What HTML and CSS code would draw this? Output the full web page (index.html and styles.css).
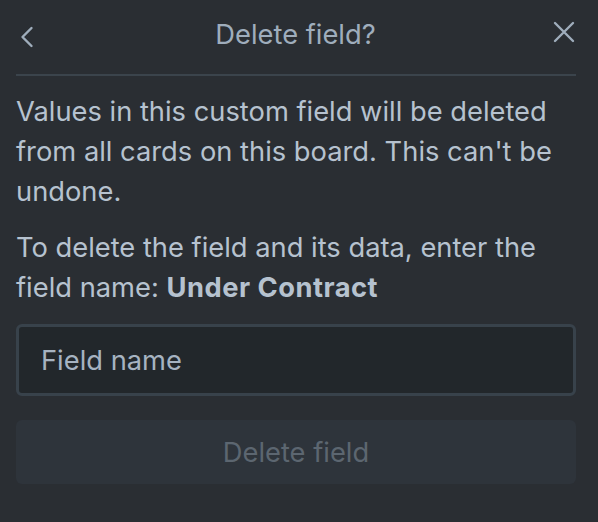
FILE: index.html
```html
<!DOCTYPE html>
<html lang="en">
<head>
<meta charset="utf-8">
<title>Delete field?</title>
<link rel="stylesheet" href="styles.css">
</head>
<body>
<div class="popover">
  <header class="header">
    <button class="icon-btn back" aria-label="Back">
      <svg width="14" height="22" viewBox="0 0 14 22"><path d="M11.5 2 L2.5 11 L11.5 20" fill="none" stroke="currentColor" stroke-width="2.4" stroke-linecap="round" stroke-linejoin="round"/></svg>
    </button>
    <h2 class="title">Delete field?</h2>
    <button class="icon-btn close" aria-label="Close">
      <svg width="22" height="22" viewBox="0 0 22 22"><path d="M2 2 L20 20 M20 2 L2 20" fill="none" stroke="currentColor" stroke-width="2.4" stroke-linecap="round"/></svg>
    </button>
  </header>
  <div class="divider"></div>
  <div class="content">
    <p class="text">Values in this custom field will be deleted from all cards on this board. This can't be undone.</p>
    <p class="text">To delete the field and its data, enter the field name: <strong>Under Contract</strong></p>
    <input class="field" type="text" placeholder="Field name">
    <button class="delete-btn" disabled>Delete field</button>
  </div>
</div>
</body>
</html>
```
FILE: styles.css
```css
html, body {
  margin: 0;
  padding: 0;
  background: #2a2e33;
}
body {
  font-family: Inter, "Noto Sans", "Liberation Sans", sans-serif;
  color: #b6c2cf;
  width: 598px;
  height: 522px;
  overflow: hidden;
}
.popover {
  padding: 0 22px 0 16px;
}
.header {
  display: flex;
  align-items: center;
  justify-content: space-between;
  height: 46px;
  padding-top: 12px;
  margin-bottom: 16px;
}
.title {
  margin: 0;
  font-size: 27.3px;
  font-weight: 400;
  line-height: 40px;
  color: #9fadbc;
}
.icon-btn {
  background: none;
  border: 0;
  padding: 0;
  color: #9fadbc;
  display: flex;
  align-items: center;
  justify-content: center;
  width: 28px;
  height: 40px;
}
.back {
  justify-content: flex-start;
  padding-left: 4px;
  margin-top: 4px;
}
.close {
  justify-content: flex-end;
  margin-top: -6px;
  margin-right: 1px;
}
.divider {
  height: 2px;
  background: #3b444c;
}
.content {
  display: flex;
  flex-direction: column;
  padding-top: 16px;
}
.text {
  margin: 0 0 16px;
  font-size: 27.3px;
  line-height: 40px;
  color: #b6c2cf;
}
.text strong {
  font-weight: 700;
  letter-spacing: 0.5px;
}
.field {
  box-sizing: border-box;
  height: 72px;
  margin: 0 0 24px;
  padding: 0 22px;
  background: #22272b;
  border: 3px solid #38424b;
  border-radius: 6px;
  font-family: inherit;
  font-size: 27.3px;
  color: #b6c2cf;
  outline: none;
}
.field::placeholder {
  color: #a6b3c1;
}
.delete-btn {
  height: 64px;
  border: 0;
  border-radius: 6px;
  background: #2e343b;
  color: #5c6670;
  font-family: inherit;
  font-size: 27.3px;
}
```
